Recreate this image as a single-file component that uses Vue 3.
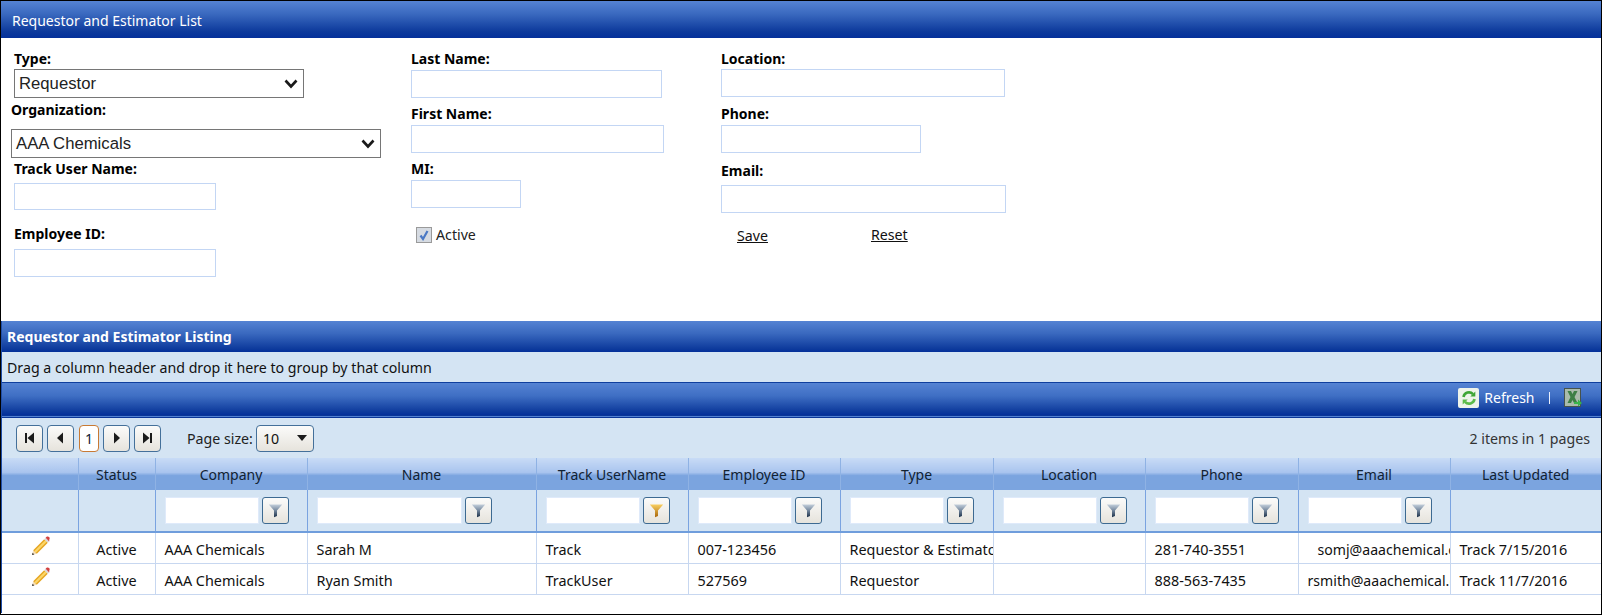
<script setup>
const columns = [
  { key: 'edit', label: '', filter: false },
  { key: 'status', label: 'Status', filter: false },
  { key: 'company', label: 'Company', filter: true },
  { key: 'name', label: 'Name', filter: true },
  { key: 'track', label: 'Track UserName', filter: true, on: true },
  { key: 'emp', label: 'Employee ID', filter: true },
  { key: 'type', label: 'Type', filter: true },
  { key: 'loc', label: 'Location', filter: true },
  { key: 'phone', label: 'Phone', filter: true },
  { key: 'email', label: 'Email', filter: true },
  { key: 'updated', label: 'Last Updated', filter: false }
]
const rows = [
  { status: 'Active', company: 'AAA Chemicals', name: 'Sarah M', track: 'Track', emp: '007-123456', type: 'Requestor & Estimator', loc: '', phone: '281-740-3551', email: 'somj@aaachemical.com', indent: true, updated: 'Track 7/15/2016' },
  { status: 'Active', company: 'AAA Chemicals', name: 'Ryan Smith', track: 'TrackUser', emp: '527569', type: 'Requestor', loc: '', phone: '888-563-7435', email: 'rsmith@aaachemical.com', indent: false, updated: 'Track 11/7/2016' }
]
</script>

<template>
  <div class="page">
    <header class="title">Requestor and Estimator List</header>

    <section class="form">
      <div class="col col1">
        <label class="lbl l-type">Type:</label>
        <div class="select s-type"><span>Requestor</span>
          <svg width="14" height="10" viewBox="0 0 14 10"><path d="M1.500 1.500 7 7.500l5.500-6" fill="none" stroke="#1a1a1a" stroke-width="2.600"/></svg>
        </div>
        <label class="lbl l-org">Organization:</label>
        <div class="select s-org"><span>AAA Chemicals</span>
          <svg width="14" height="10" viewBox="0 0 14 10"><path d="M1.500 1.500 7 7.500l5.500-6" fill="none" stroke="#1a1a1a" stroke-width="2.600"/></svg>
        </div>
        <label class="lbl l-track">Track User Name:</label>
        <input class="inp i-track" type="text" />
        <label class="lbl l-emp">Employee ID:</label>
        <input class="inp i-emp" type="text" />
      </div>

      <div class="col col2">
        <label class="lbl l-last">Last Name:</label>
        <input class="inp i-last" type="text" />
        <label class="lbl l-mid">First Name:</label>
        <input class="inp i-first" type="text" />
        <label class="lbl l-mid">MI:</label>
        <input class="inp i-mi" type="text" />
        <div class="active-row">
          <span class="check">
            <svg width="12" height="12" viewBox="0 0 12 12"><path d="M2.500 6.500 5 10l4.500-8" fill="none" stroke="#4a78c4" stroke-width="2.200"/></svg>
          </span>
          <span class="active-txt">Active</span>
        </div>
      </div>

      <div class="col col3">
        <label class="lbl l-last">Location:</label>
        <input class="inp i-loc" type="text" />
        <label class="lbl l-phone">Phone:</label>
        <input class="inp i-phone" type="text" />
        <label class="lbl l-email">Email:</label>
        <input class="inp i-email" type="text" />
        <div class="actions">
          <a class="link save">Save</a>
          <a class="link reset">Reset</a>
        </div>
      </div>
    </section>

    <section class="grid">
      <svg class="defs" width="0" height="0">
        <defs>
          <linearGradient id="funnelGrey" x1="0" y1="0" x2="0" y2="1">
            <stop offset="0" stop-color="#c3cfdb" /><stop offset=".5" stop-color="#6f8299" /><stop offset="1" stop-color="#1c3048" />
          </linearGradient>
          <linearGradient id="funnelOrange" x1="0" y1="0" x2="0" y2="1">
            <stop offset="0" stop-color="#f9cf60" /><stop offset="1" stop-color="#a9660a" />
          </linearGradient>
        </defs>
      </svg>

      <div class="grid-title">Requestor and Estimator Listing</div>
      <div class="group">Drag a column header and drop it here to group by that column</div>

      <div class="toolbar">
        <span class="refresh-ic">
          <svg width="16" height="16" viewBox="0 0 16 16">
            <path d="M2.500 7A5.500 5.500 0 0 1 12 4.200" fill="none" stroke="#3fa535" stroke-width="2.600"/>
            <path d="M14.300 1.500v5h-5z" fill="#3fa535"/>
            <path d="M13.500 9A5.500 5.500 0 0 1 4 11.800" fill="none" stroke="#5cbb4a" stroke-width="2.600"/>
            <path d="M1.700 14.500v-5h5z" fill="#5cbb4a"/>
          </svg>
        </span>
        <span class="refresh-txt">Refresh</span>
        <span class="sep"></span>
        <svg class="xls" width="18" height="20" viewBox="0 0 18 20">
          <rect x=".5" y=".5" width="16" height="18" fill="#a9bbab" stroke="#46524c"/>
          <path d="M3.500 3h3.500L8.500 6 10 3h3.500l-3 6 3 6H10L8.500 12 7 15H3.500l3-6z" fill="#3d7f45"/>
          <path d="M10 14h4v-2.500l4 3.500-4 3.500V16h-4z" fill="#39b54a"/>
        </svg>
      </div>

      <div class="pager">
        <button class="pbtn">
          <svg width="11" height="12" viewBox="0 0 11 12"><path d="M1 1h2v10H1zM10 .5v11L3.500 6z" fill="#1b1b1b"/></svg>
        </button>
        <button class="pbtn">
          <svg width="11" height="12" viewBox="0 0 11 12"><path d="M8 .5v11L2 6z" fill="#1b1b1b"/></svg>
        </button>
        <span class="pcur">1</span>
        <button class="pbtn">
          <svg width="11" height="12" viewBox="0 0 11 12"><path d="M3 .5v11L9 6z" fill="#1b1b1b"/></svg>
        </button>
        <button class="pbtn">
          <svg width="11" height="12" viewBox="0 0 11 12"><path d="M1 .5v11L7.500 6zM8 1h2v10H8z" fill="#1b1b1b"/></svg>
        </button>
        <span class="psize">Page size:</span>
        <div class="psel"><span>10</span>
          <svg width="10" height="6" viewBox="0 0 10 6"><path d="M0 0h10L5 6z" fill="#1b1b1b"/></svg>
        </div>
        <span class="pinfo">2 items in 1 pages</span>
      </div>

      <table class="tbl">
        <colgroup>
          <col v-for="c in columns" :key="c.key" :class="'c-' + c.key" />
        </colgroup>
        <thead>
          <tr class="head">
            <th v-for="c in columns" :key="c.key">{{ c.label }}</th>
          </tr>
          <tr class="filters">
            <td v-for="c in columns" :key="c.key">
              <div v-if="c.filter" class="filter">
                <input class="finp" :class="{ wide: c.key === 'name' }" type="text" />
                <button class="fbtn">
                  <svg width="15" height="15" viewBox="0 0 15 15">
                    <path d="M.8 1.500h13.400L9 7.500V13l-3 1.200V7.500z" :fill="c.on ? 'url(#funnelOrange)' : 'url(#funnelGrey)'"/>
                  </svg>
                </button>
              </div>
            </td>
          </tr>
        </thead>
        <tbody>
          <tr v-for="r in rows" :key="r.name" class="row">
            <td class="edit">
              <svg width="20" height="20" viewBox="0 0 20 20">
                <path d="M1 19 2.200 14.200 5.800 17.800z" fill="#f3dcb8"/>
                <path d="M1 19 1.600 16.700 3.300 18.400z" fill="#333"/>
                <path d="M2.200 14.200 13.200 3.200 16.800 6.800 5.800 17.800z" fill="#e6a521"/>
                <path d="M3.200 15.200 14.200 4.200 15.800 5.800 4.800 16.800z" fill="#fbd668"/>
                <path d="M13.200 3.200 14.600 1.800 18.200 5.400 16.800 6.800z" fill="#d9d9d9"/>
                <path d="M14.600 1.800 15.600.8c.8-.6 1.800-.5 2.500.2s.8 1.700.2 2.500l-.1 1.900z" fill="#d2413f"/>
              </svg>
            </td>
            <td class="center">{{ r.status }}</td>
            <td>{{ r.company }}</td>
            <td>{{ r.name }}</td>
            <td>{{ r.track }}</td>
            <td>{{ r.emp }}</td>
            <td>{{ r.type }}</td>
            <td>{{ r.loc }}</td>
            <td>{{ r.phone }}</td>
            <td class="mail" :class="{ indent: r.indent }">{{ r.email }}</td>
            <td>{{ r.updated }}</td>
          </tr>
        </tbody>
      </table>
    </section>
  </div>
</template>

<style scoped>
.page {
  box-sizing: border-box;
  width: 1602px;
  height: 615px;
  border: 1px solid #000;
  background: #fff;
  font-family: "Noto Sans", "Open Sans", sans-serif;
  font-size: 14.200px;
  color: #111;
  overflow: hidden;
}
.title {
  box-sizing: border-box;
  height: 37px;
  padding: 3px 0 0 11px;
  line-height: 34px;
  color: #fff;
  font-size: 14px;
  background: linear-gradient(#5583d3 0%, #3a69bf 35%, #0d3a9c 82%, #04309a 100%);
}
.form {
  display: flex;
  height: 283px;
  padding-left: 13px;
}
.col { display: flex; flex-direction: column; align-items: flex-start; }
.col1 { width: 397px; }
.col2 { width: 310px; }
.lbl {
  display: block;
  height: 16px;
  line-height: 16px;
  font-weight: 700;
  font-size: 14px;
  color: #000;
}
.inp {
  box-sizing: border-box;
  display: block;
  height: 28px;
  padding: 0;
  border: 1px solid #c3d6f4;
  outline: none;
  background: #fff;
}
.select {
  box-sizing: border-box;
  display: flex;
  align-items: center;
  justify-content: space-between;
  height: 29px;
  padding: 0 5px 0 4px;
  border: 1.500px solid #767676;
  font-family: "Liberation Sans", Arial, sans-serif;
  font-size: 16.700px;
  color: #222;
  background: #fff;
}
.l-type { margin-top: 13px; }
.s-type { margin-top: 2px; width: 290px; }
.l-org { margin-top: 4px; margin-left: -3px; }
.s-org { margin-top: 11px; margin-left: -3px; width: 370px; }
.l-track { margin-top: 3px; }
.i-track { margin-top: 6px; width: 202px; height: 27px; }
.l-emp { margin-top: 16px; }
.i-emp { margin-top: 7px; width: 202px; }

.l-last { margin-top: 13px; }
.i-last { margin-top: 3px; width: 251px; }
.l-mid { margin-top: 8px; }
.i-first { margin-top: 3px; width: 253px; }
.i-mi { margin-top: 3px; width: 110px; }
.active-row {
  display: flex;
  align-items: center;
  gap: 4px;
  height: 16px;
  margin-top: 19px;
  margin-left: 5px;
  color: #222;
}
.active-txt { padding-bottom: 2px; }
.check {
  box-sizing: border-box;
  display: flex;
  align-items: center;
  justify-content: center;
  width: 16px;
  height: 16px;
  border: 1px solid #9a9a9a;
  background: #d6dbe2;
}
.i-loc { margin-top: 2px; width: 284px; }
.l-phone { margin-top: 9px; }
.i-phone { margin-top: 3px; width: 200px; }
.l-email { margin-top: 10px; }
.i-email { margin-top: 6px; width: 285px; }
.actions {
  display: flex;
  height: 16px;
  line-height: 16px;
  margin-top: 14px;
  margin-left: 16px;
}
.link { color: #111; text-decoration: underline; }
.save { width: 134px; padding-top: 1px; }

.grid {
  height: 292px;
  border-left: 1px solid #1f4ea8;
}
.defs { position: absolute; }
.grid-title {
  box-sizing: border-box;
  height: 31px;
  line-height: 31px;
  padding: 0 0 0 5px;
  font-size: 14px;
  color: #fff;
  font-weight: 700;
  background: linear-gradient(#5583d3 0%, #3a69bf 40%, #0d3a9c 90%, #04309a 100%);
}
.group {
  box-sizing: border-box;
  height: 30px;
  line-height: 30px;
  padding: 1px 0 0 5px;
  background: #d4e4f3;
  color: #111;
}
.toolbar {
  box-sizing: border-box;
  display: flex;
  align-items: center;
  justify-content: flex-end;
  height: 36px;
  padding: 0 19px 3px 0;
  border-top: 1.500px solid #0f3f9e;
  border-bottom: 3px double #0a3698;
  background: linear-gradient(#5583d3 0%, #3f6fc4 40%, #0d3a9c 90%, #04309a 100%);
}
.refresh-ic {
  box-sizing: border-box;
  display: flex;
  align-items: center;
  justify-content: center;
  width: 21px;
  height: 20px;
  border-radius: 2px;
  background: #eef3ea;
}
.refresh-txt { margin-left: 5px; color: #fff; font-size: 14px; }
.sep { width: 1.500px; height: 12px; margin: 0 14px 0 14px; background: #e8eefc; }
.pager {
  box-sizing: border-box;
  display: flex;
  align-items: center;
  height: 40px;
  padding: 0 11px 0 14px;
  background: #d4e4f3;
}
.pbtn {
  box-sizing: border-box;
  display: flex;
  align-items: center;
  justify-content: center;
  width: 27px;
  height: 27px;
  margin-right: 4px;
  padding: 0;
  border: 1.500px solid #44709a;
  border-radius: 4px;
  background: linear-gradient(#fbfbfa, #e6e3dc);
}
.pcur {
  box-sizing: border-box;
  width: 20px;
  height: 27px;
  margin: 0 4px 0 1px;
  line-height: 25px;
  text-align: center;
  border: 1.500px solid #c87a34;
  border-radius: 4px;
  background: #fff;
  color: #123;
}
.psize { width: 69px; margin-left: 22px; color: #222; }
.psel {
  box-sizing: border-box;
  display: flex;
  align-items: center;
  justify-content: space-between;
  width: 58px;
  height: 27px;
  padding: 0 6px 0 6px;
  border: 1.500px solid #44709a;
  border-radius: 4px;
  background: linear-gradient(#fbfbfa, #e6e3dc);
}
.pinfo { margin-left: auto; color: #333; }

.tbl {
  width: 1599px;
  table-layout: fixed;
  border-collapse: collapse;
}
.c-edit { width: 76px; }
.c-status { width: 77px; }
.c-company { width: 152px; }
.c-name { width: 229px; }
.c-track { width: 152px; }
.c-emp { width: 152px; }
.c-type { width: 153px; }
.c-loc { width: 152px; }
.c-phone { width: 153px; }
.c-email { width: 152px; }
.c-updated { width: 151px; }
.head th {
  box-sizing: border-box;
  height: 32px;
  padding: 1px 0 0;
  font-weight: 400;
  font-size: 14px;
  color: #123;
  border-left: 1px solid #8fb2e4;
  background: linear-gradient(#c8dbf6 0%, #a9c4ee 45%, #7ba4df 55%, #7ba4df 100%);
}
.head th:first-child, .filters td:first-child, .row td:first-child { border-left: 0; }
.filters td {
  box-sizing: border-box;
  height: 42px;
  padding: 0 0 0 9px;
  background: #d4e4f3;
  border-left: 1px solid #7aa3e0;
  border-bottom: 2px solid #6f9ddc;
}
.filter { display: flex; align-items: center; gap: 3px; }
.finp {
  box-sizing: border-box;
  flex: none;
  width: 94px;
  height: 27px;
  padding: 0;
  border: 1px solid #dfeafa;
  outline: none;
  background: #fff;
}
.finp.wide { width: 145px; }
.fbtn {
  box-sizing: border-box;
  display: flex;
  align-items: center;
  justify-content: center;
  flex: none;
  width: 27px;
  height: 27px;
  padding: 0;
  border: 1.500px solid #3d6a92;
  border-radius: 3px;
  background: linear-gradient(#fbfbfa, #e6e3dc);
}
.row td {
  box-sizing: border-box;
  height: 31px;
  padding: 3px 0 0 9px;
  overflow: hidden;
  white-space: nowrap;
  font-size: 14.400px;
  color: #111;
  border-left: 1px solid #c7d7f0;
  border-bottom: 1px solid #c7d7f0;
}
.row td.edit { padding: 0 0 4px 29px; }
.row td.edit svg { display: block; }
.row td.center { padding: 3px 0 0; text-align: center; }
.row td.mail { font-size: 14.100px; }
.row td.indent { padding-left: 19px; }
</style>
